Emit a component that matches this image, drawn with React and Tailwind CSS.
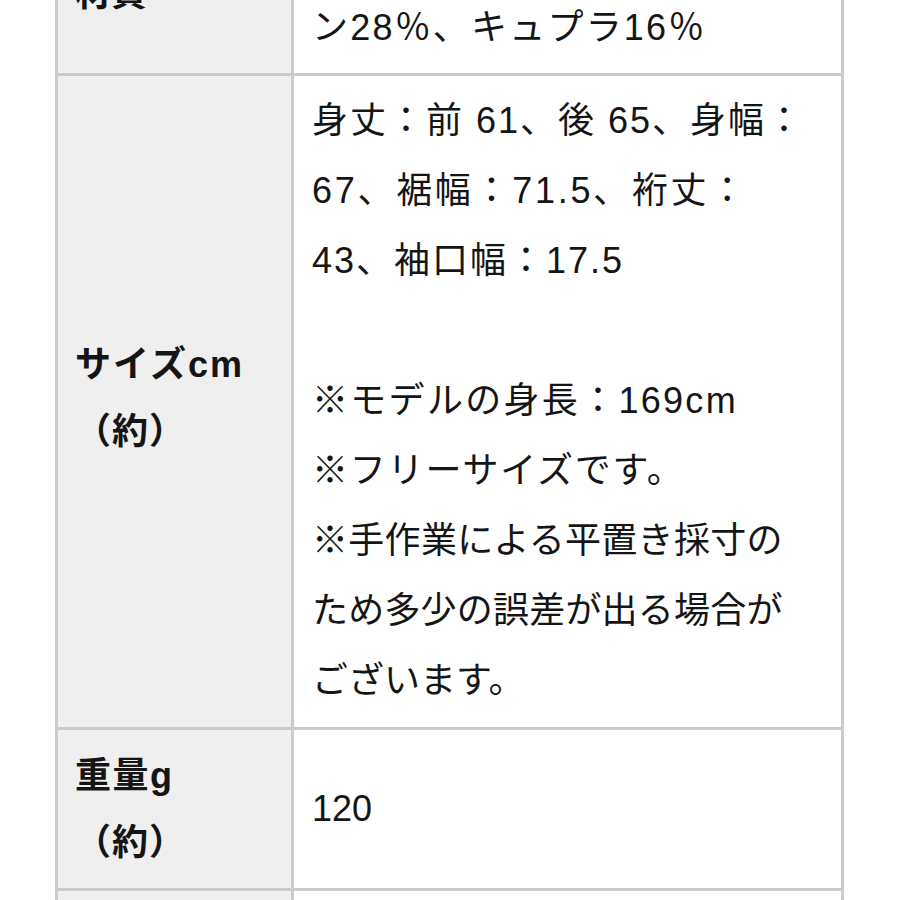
import React from "react";

const font = { fontFamily: '"Liberation Sans", "Noto Sans CJK JP", sans-serif' };

function Row({ label, lines, rightClass = "", labelClass = "" }) {
  return (
    <div className="flex">
      <div
        className={`w-[236px] shrink-0 bg-[#efefef] border-r-[3px] border-b-[3px] border-[#cbcbcb] pl-[17px] flex flex-col justify-center font-bold text-[36px] leading-[67px] text-[#151515] ${labelClass}`}
      >
        {label.map((l, i) => (
          <div key={i} className={`whitespace-nowrap ${l.c || ""}`}>{l.t}</div>
        ))}
      </div>
      <div
        className={`flex-1 bg-white border-r-[3px] border-b-[3px] border-[#cbcbcb] pl-[18px] pr-[10px] text-[36px] leading-[70px] text-[#151515] ${rightClass}`}
      >
        {lines.map((l, i) => (
          <div key={i} className={`whitespace-nowrap h-[70px] ${l.c || ""}`}>{l.t}</div>
        ))}
      </div>
    </div>
  );
}

export default function App() {
  return (
    <div className="w-[900px] h-[900px] overflow-hidden bg-white" style={font}>
      <div className="ml-[55px] mt-[-90px] w-[789px] border-l-[3px] border-t-[3px] border-[#cbcbcb]">
        <Row
          label={[{ t: "材質" }]}
          lines={[
            { t: "ポリエステル56％、レーヨ", c: "tracking-[2px]" },
            { t: "ン28％、キュプラ16％", c: "tracking-[2.2px]" },
          ]}
          rightClass="py-[10px]"
        />
        <Row
          label={[
            { t: "サイズcm", c: "tracking-[2px]" },
            { t: "（約）", c: "tracking-[1px]" },
          ]}
          lines={[
            { t: "身丈：前 61、後 65、身幅：", c: "tracking-[2px]" },
            { t: "67、裾幅：71.5、裄丈：", c: "tracking-[2.7px]" },
            { t: "43、袖口幅：17.5", c: "tracking-[2px]" },
            { t: "\u00a0" },
            { t: "※モデルの身長：169cm", c: "tracking-[2.3px]" },
            { t: "※フリーサイズです。", c: "tracking-[1.8px]" },
            { t: "※手作業による平置き採寸の", c: "tracking-[0.3px]" },
            { t: "ため多少の誤差が出る場合が", c: "tracking-[0.2px]" },
            { t: "ございます。" },
          ]}
          rightClass="pt-[10px] pb-[11px]"
          labelClass="pb-[8px]"
        />
        <Row
          label={[
            { t: "重量g", c: "tracking-[1.5px]" },
            { t: "（約）", c: "tracking-[1px]" },
          ]}
          lines={[{ t: "120" }]}
          rightClass="flex flex-col justify-center"
          labelClass="py-[12px]"
        />
        <Row label={[{ t: "生産国" }]} lines={[{ t: "中国" }]} rightClass="py-[10px]" />
      </div>
    </div>
  );
}
